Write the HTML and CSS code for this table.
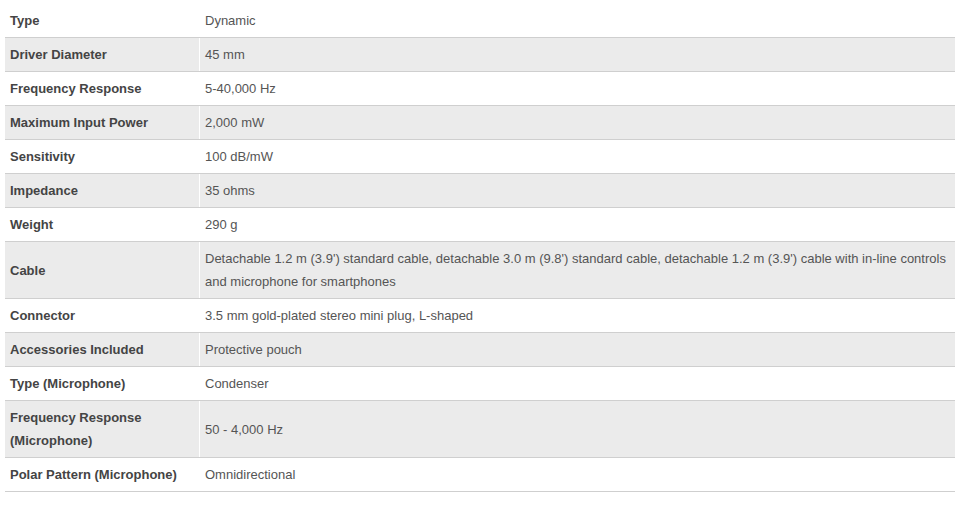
FILE: index.html
```html
<!DOCTYPE html>
<html>
<head>
<meta charset="utf-8">
<link rel="stylesheet" href="styles.css">
</head>
<body>
<table class="specs">
  <tbody>
    <tr><th>Type</th><td>Dynamic</td></tr>
    <tr><th>Driver Diameter</th><td>45 mm</td></tr>
    <tr><th>Frequency Response</th><td>5-40,000 Hz</td></tr>
    <tr><th>Maximum Input Power</th><td>2,000 mW</td></tr>
    <tr><th>Sensitivity</th><td>100 dB/mW</td></tr>
    <tr><th>Impedance</th><td>35 ohms</td></tr>
    <tr><th>Weight</th><td>290 g</td></tr>
    <tr><th>Cable</th><td>Detachable 1.2 m (3.9') standard cable, detachable 3.0 m (9.8') standard cable, detachable 1.2 m (3.9') cable with in-line controls and microphone for smartphones</td></tr>
    <tr><th>Connector</th><td>3.5 mm gold-plated stereo mini plug, L-shaped</td></tr>
    <tr><th>Accessories Included</th><td>Protective pouch</td></tr>
    <tr><th>Type (Microphone)</th><td>Condenser</td></tr>
    <tr><th>Frequency Response (Microphone)</th><td>50 - 4,000 Hz</td></tr>
    <tr><th>Polar Pattern (Microphone)</th><td>Omnidirectional</td></tr>
  </tbody>
</table>
</body>
</html>
```
FILE: styles.css
```css
html, body {
  margin: 0;
  padding: 0;
  background: #fff;
}
body {
  padding: 4px 5px 0 5px;
  font-family: "Liberation Sans", Arial, sans-serif;
  font-size: 13px;
  color: #555;
}
.specs {
  width: 950px;
  border-collapse: collapse;
}
.specs th,
.specs td {
  padding: 5px 5px;
  line-height: 23px;
  text-align: left;
  vertical-align: middle;
  border-bottom: 1px solid #cfcfcf;
}
.specs th {
  width: 184px;
  font-weight: bold;
  color: #444;
  border-right: 1px solid #fff;
}
.specs td {
  color: #555;
}
.specs tr:nth-child(even) th,
.specs tr:nth-child(even) td {
  background: #ebebeb;
}
```
